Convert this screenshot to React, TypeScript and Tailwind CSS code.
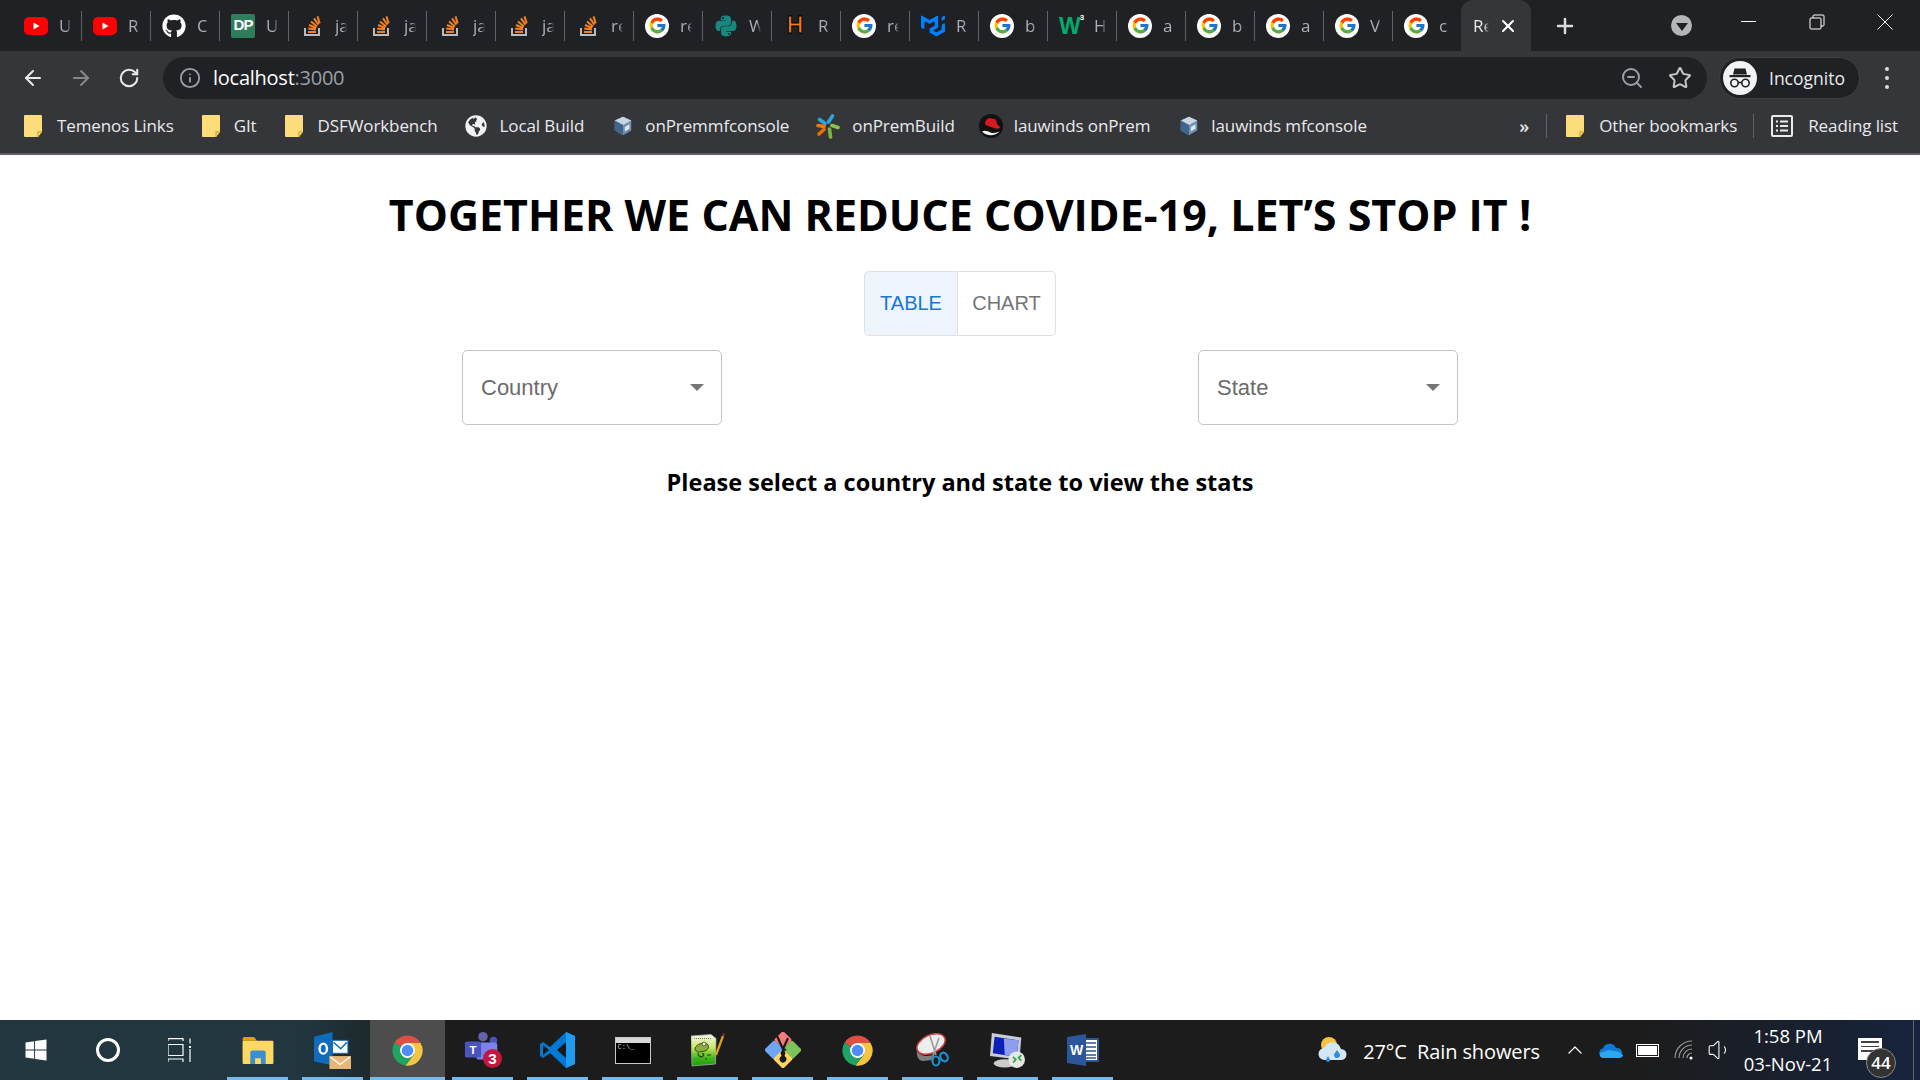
import React from 'react';
import { ArrowLeft, ArrowRight, RotateCw, Info, ZoomOut, Star, X, Plus, ChevronUp, Volume1 } from 'lucide-react';
import { FcGoogle } from 'react-icons/fc';
import { FaGithub, FaPython, FaWindows, FaGlobeAmericas } from 'react-icons/fa';
import { SiMui } from 'react-icons/si';

const ui = "font-['Open_Sans',sans-serif]";

function Youtube() {
  return (
    <svg viewBox="0 0 24 24" className="w-6 h-6">
      <rect x="0" y="3" width="24" height="18" rx="5" fill="#f00" />
      <path d="M9.5 8.5v7l6-3.5z" fill="#fff" />
    </svg>
  );
}

function GoogleIcon() {
  return (
    <div className="w-6 h-6 rounded-full bg-white flex items-center justify-center">
      <FcGoogle className="w-[19px] h-[19px]" />
    </div>
  );
}

function StackIcon() {
  return (
    <svg viewBox="0 0 24 24" className="w-6 h-6" fill="none">
      <path d="M5 14v7h14v-7" stroke="#bcbbbb" strokeWidth="2" />
      <path d="M8 18h8M8.2 14.6l7.7 1M9 11l7.2 3M11 7.4l6 5M14 4.4l4.4 6.2M17.5 2.4l2.2 7" stroke="#f48024" strokeWidth="2" />
    </svg>
  );
}

function TabIcon({ kind }: { kind: string }) {
  if (kind === 'yt') return <Youtube />;
  if (kind === 'g') return <GoogleIcon />;
  if (kind === 'gh') return <div className="w-6 h-6 rounded-full bg-[#202124] text-white"><FaGithub className="w-6 h-6" /></div>;
  if (kind === 'so') return <StackIcon />;
  if (kind === 'dp')
    return (
      <div className="w-6 h-6 bg-[#2e7d5b] rounded-[2px] flex items-center justify-center text-white text-[15px] font-bold font-['Liberation_Sans',sans-serif] tracking-[-1px]">
        DP
      </div>
    );
  if (kind === 'py') return <FaPython className="w-6 h-6 text-[#17877f]" />;
  if (kind === 'h')
    return (
      <div className="w-6 h-6 flex items-center justify-center text-[#e67e22] text-[23px] leading-none font-bold font-['Liberation_Sans',sans-serif] [-webkit-text-stroke:1px_#000]">
        H
      </div>
    );
  if (kind === 'mui') return <SiMui className="w-6 h-6 text-[#007fff]" />;
  return (
    <div className="w-6 h-6 flex items-start text-[#04aa6d] font-bold font-['Liberation_Sans',sans-serif] leading-none">
      <span className="text-[23px] mt-[1px] tracking-[-1px]">W</span>
      <span className="text-[8px] text-white">3</span>
    </div>
  );
}

const tabs = [
  ['yt', 'U'], ['yt', 'R'], ['gh', 'C'], ['dp', 'U'], ['so', 'ja'], ['so', 'ja'], ['so', 'ja'],
  ['so', 'ja'], ['so', 're'], ['g', 're'], ['py', 'W'], ['h', 'R'], ['g', 're'], ['mui', 'R'],
  ['g', 'b'], ['w3', 'H'], ['g', 'a'], ['g', 'b'], ['g', 'a'], ['g', 'V'], ['g', 'c'],
];

function TabStrip() {
  return (
    <div className="h-[51px] bg-[#202124] flex items-center pl-[13px] shrink-0">
      {tabs.map(([kind, label], i) => (
        <div key={i} className="w-[69px] h-[30px] flex items-center pl-[11px] border-r border-[#5f6368]">
          <TabIcon kind={kind} />
          <span className="ml-[11px] w-[12px] overflow-hidden text-[17px] text-[#a8b0b8] whitespace-nowrap [mask-image:linear-gradient(90deg,#000_65%,transparent)]">{label}</span>
        </div>
      ))}
      <div className="w-[70px] h-[51px] bg-[#35363a] rounded-t-xl -ml-[1px] flex items-center pl-3">
        <span className="w-[16px] overflow-hidden text-[17px] text-[#e8eaed] whitespace-nowrap [mask-image:linear-gradient(90deg,#000_70%,transparent)]">Re</span>
        <X className="w-5 h-5 ml-[9px] text-white" strokeWidth={2.5} />
      </div>
      <Plus className="w-6 h-6 ml-[22px] text-[#dadce0]" strokeWidth={2.5} />
      <div className="w-[21px] h-[21px] rounded-full bg-[#b4b6ba] ml-[94px] flex items-center justify-center">
        <div className="w-0 h-0 border-x-[6px] border-x-transparent border-t-[8px] border-t-[#202124] mt-[2px]" />
      </div>
      <div className="ml-[49px] w-[15px] h-[1px] bg-white -mt-[8px]" />
      <svg viewBox="0 0 16 16" className="ml-[53px] w-4 h-4 -mt-[7px]" fill="none" stroke="#fff" strokeWidth="1">
        <rect x="1" y="4" width="11" height="11" rx="1" />
        <path d="M4 4V2a1 1 0 0 1 1-1h9a1 1 0 0 1 1 1v9a1 1 0 0 1-1 1h-2" />
      </svg>
      <svg viewBox="0 0 16 16" className="ml-[52px] w-4 h-4 -mt-[7px]" fill="none" stroke="#fff" strokeWidth="1">
        <path d="M0.5 0.5l15 15M15.5 0.5l-15 15" />
      </svg>
    </div>
  );
}

function IncognitoAvatar() {
  return (
    <svg viewBox="0 0 34 34" className="w-[34px] h-[34px]">
      <circle cx="17" cy="17" r="17" fill="#f1f3f4" />
      <path d="M11.5 7.5h11l1.5 6h-14z" fill="#202124" />
      <rect x="6.5" y="14" width="21" height="2.2" fill="#202124" />
      <circle cx="11.5" cy="22" r="3.7" fill="none" stroke="#202124" strokeWidth="1.6" />
      <circle cx="22.5" cy="22" r="3.7" fill="none" stroke="#202124" strokeWidth="1.6" />
      <path d="M15 21.5h4" stroke="#202124" strokeWidth="1.6" />
    </svg>
  );
}

function Toolbar() {
  return (
    <div className="h-[48px] bg-[#35363a] flex items-end shrink-0">
      <div className="flex items-center h-[42px] pl-[21px]">
        <ArrowLeft className="w-6 h-6 text-[#e8eaed]" strokeWidth={2} />
        <ArrowRight className="w-6 h-6 ml-6 text-[#85878a]" strokeWidth={2} />
        <RotateCw className="w-[22px] h-[22px] ml-[25px] text-[#e8eaed]" strokeWidth={2.2} />
      </div>
      <div className="h-[42px] w-[1544px] ml-[23px] rounded-full bg-[#202124] flex items-center pl-[16px] pr-[15px]">
        <Info className="w-[22px] h-[22px] text-[#9aa0a6]" strokeWidth={2} />
        <span className="ml-[12px] text-[20px] tracking-[-0.25px] text-white">
          localhost<span className="text-[#9aa0a6]">:3000</span>
        </span>
        <ZoomOut className="w-6 h-6 ml-auto text-[#9aa0a6]" strokeWidth={2} />
        <Star className="w-6 h-6 ml-6 text-[#c4c7c5]" strokeWidth={2} />
      </div>
      <div className="h-[42px] w-[141px] ml-[12px] rounded-full bg-[#202124] border border-[#3c4043] flex items-center pl-[3px]">
        <IncognitoAvatar />
        <span className="ml-[12px] text-[17.5px] text-[#e8eaed]">Incognito</span>
      </div>
      <div className="h-[42px] flex flex-col items-center justify-center gap-[5px] ml-[25px]">
        <div className="w-1 h-1 rounded-full bg-[#dadce0]" />
        <div className="w-1 h-1 rounded-full bg-[#dadce0]" />
        <div className="w-1 h-1 rounded-full bg-[#dadce0]" />
      </div>
    </div>
  );
}

function Folder() {
  return (
    <svg viewBox="0 0 18 22" className="w-[18px] h-[22px] shrink-0">
      <path d="M0 1a1 1 0 0 1 1-1h16a1 1 0 0 1 1 1v16l-4 5H1a1 1 0 0 1-1-1z" fill="#fddc7a" />
      <path d="M14 22v-5h4" fill="none" stroke="#d9a92e" strokeWidth="1.4" />
    </svg>
  );
}

function Cube() {
  return (
    <svg viewBox="0 0 24 24" className="w-[22px] h-[22px] shrink-0">
      <path d="M12 2l9 4v11l-9 5-9-5V6z" fill="#6f8fb0" />
      <path d="M12 2l9 4-9 5-9-5z" fill="#c9d6e2" />
      <path d="M3 6l9 5v11l-9-5z" fill="#3f658d" />
      <path d="M14 13l5-3v5l-5 3z" fill="#dfe7ee" />
    </svg>
  );
}

function Pinwheel() {
  return (
    <svg viewBox="0 0 24 25" className="w-6 h-[25px] shrink-0" fill="none" strokeWidth="3.6" strokeLinecap="round">
      <path d="M3.5 5.5L9 9.5" stroke="#2ca6dd" />
      <path d="M16.5 2L12.5 8" stroke="#2ca6dd" />
      <path d="M22 13.5L16 11.5" stroke="#8bc34a" />
      <path d="M14.5 23L13.5 15" stroke="#7cb342" />
      <path d="M2 11.5L8 12.5" stroke="#f57c00" />
      <path d="M3 20L8 15.5" stroke="#ef6c00" />
    </svg>
  );
}

function RedHat() {
  return (
    <svg viewBox="0 0 24 24" className="w-6 h-6 shrink-0">
      <circle cx="12" cy="12" r="12" fill="#111" />
      <path d="M6 10c0-3 2-6 5-6l3 1c2-1 4 2 4 5l3 3c0 2-3 2-6 1l-7-2.5c-1 0-1.5-1-2-1.5z" fill="#d71920" />
      <path d="M3 17.5c3-1.500 6 0 8.500 1 3 1 6 .5 9-1A12 12 0 0 1 3 17.500z" fill="#f4f4f4" />
    </svg>
  );
}

function ReadingList() {
  return (
    <svg viewBox="0 0 22 22" className="w-[22px] h-[22px]" fill="none" stroke="#e8eaed" strokeWidth="2">
      <rect x="1" y="1" width="20" height="20" rx="1" />
      <path d="M5 6.5h2M9 6.5h8M5 11h2M9 11h8M5 15.5h2M9 15.5h8" />
    </svg>
  );
}

const bookmarks: [React.ReactNode, string, string, string][] = [
  [<Folder />, 'Temenos Links', 'ml-[24px]', 'gap-[15px]'],
  [<Folder />, 'GIt', 'ml-[28px]', 'gap-[14px]'],
  [<Folder />, 'DSFWorkbench', 'ml-[28px]', 'gap-[15px]'],
  [<FaGlobeAmericas className="w-[22px] h-[22px] text-[#f1f3f4] shrink-0" />, 'Local Build', 'ml-[27px]', 'gap-[13px]'],
  [<Cube />, 'onPremmfconsole', 'ml-[28px]', 'gap-[11px]'],
  [<Pinwheel />, 'onPremBuild', 'ml-[27px]', 'gap-[12px]'],
  [<RedHat />, 'lauwinds onPrem', 'ml-[24px]', 'gap-[11px]'],
  [<Cube />, 'lauwinds mfconsole', 'ml-[28px]', 'gap-[11px]'],
];

function BookmarksBar() {
  return (
    <div className="h-[54px] bg-[#35363a] flex items-center shrink-0 text-[17px] tracking-[-0.1px] text-[#e8eaed]">
      {bookmarks.map(([icon, label, cls, gap], i) => (
        <div key={i} className={`flex items-center ${gap} ${cls}`}>
          {icon}
          <span className="whitespace-nowrap">{label}</span>
        </div>
      ))}
      <span className="ml-auto text-[18px] font-semibold">»</span>
      <div className="w-[1px] h-[24px] bg-[#5f6368] ml-[17px]" />
      <div className="flex items-center gap-[15px] ml-[19px]">
        <Folder />
        <span className="whitespace-nowrap">Other bookmarks</span>
      </div>
      <div className="w-[1px] h-[24px] bg-[#5f6368] ml-[16px]" />
      <div className="flex items-center gap-[15px] ml-[17px] mr-[22px]">
        <ReadingList />
        <span className="whitespace-nowrap">Reading list</span>
      </div>
    </div>
  );
}

function Select({ label }: { label: string }) {
  return (
    <div className="w-[260px] h-[75px] border border-[#c4c4c4] rounded-[5px] flex items-center pl-[18px] pr-[17px] font-['Liberation_Sans',sans-serif] text-[22px] text-[#6b6b6b]">
      <span>{label}</span>
      <div className="ml-auto w-0 h-0 border-x-[7px] border-x-transparent border-t-[7px] border-t-[#757575]" />
    </div>
  );
}

function Page() {
  return (
    <main className="flex-1 bg-white flex flex-col items-center border-t-2 border-[#5f6063]">
      <h1 className="mt-[30px] text-[43px] leading-[60px] font-bold text-black">
        TOGETHER WE CAN REDUCE COVIDE-19, LET’S STOP IT !
      </h1>
      <div className="mt-[26px] flex h-[65px] font-['Liberation_Sans',sans-serif] text-[20px]">
        <button className="w-[94px] pb-[2px] bg-[#edf4fb] text-[#1976d2] border border-[#e0e0e0] rounded-l-[5px]">TABLE</button>
        <button className="w-[98px] pb-[2px] bg-white text-[#757575] border border-l-0 border-[#e0e0e0] rounded-r-[5px]">CHART</button>
      </div>
      <div className="mt-[14px] w-[996px] flex justify-between">
        <Select label="Country" />
        <Select label="State" />
      </div>
      <p className="mt-[39px] text-[23.5px] leading-[36px] font-bold text-black">
        Please select a country and state to view the stats
      </p>
    </main>
  );
}

function ChromeIcon() {
  return (
    <svg viewBox="0 0 24 24" className="w-[33px] h-[33px]">
      <path d="M2.6 6.3A11 11 0 0 1 21.5 6.5H12L7.2 9.2z" fill="#dd5144" />
      <path d="M21.5 6.5A11 11 0 0 1 10.5 22.9L16.8 14.7 12 6.5z" fill="#f4c542" />
      <path d="M10.5 22.9A11 11 0 0 1 2.6 6.3L7.2 9.2 12 17.5 16.8 14.7z" fill="#1fa463" />
      <circle cx="12" cy="12" r="5.4" fill="#fff" />
      <circle cx="12" cy="12" r="4.2" fill="#4f8ef7" />
    </svg>
  );
}

function ExplorerIcon() {
  return (
    <svg viewBox="0 0 32 28" className="w-8 h-[27px]">
      <path d="M0 2a2 2 0 0 1 2-2h10l3 4H0z" fill="#e0a100" />
      <rect x="0" y="4" width="32" height="24" rx="1" fill="#fdd862" />
      <path d="M8 28V16a2 2 0 0 1 2-2h12a2 2 0 0 1 2 2v12h-5v-6h-6v6z" fill="#3a8fd0" />
    </svg>
  );
}

function OutlookIcon() {
  return (
    <svg viewBox="0 0 36 40" preserveAspectRatio="none" className="w-[37px] h-[37px]">
      <path d="M0 5l18-5v36L0 32z" fill="#0f6cbd" />
      <rect x="18" y="9" width="15" height="14" fill="#fff" stroke="#0f6cbd" />
      <path d="M19 11l7 7 6-7" fill="none" stroke="#0f6cbd" strokeWidth="1.5" />
      <ellipse cx="9" cy="18" rx="3.6" ry="5.4" fill="none" stroke="#fff" strokeWidth="2.4" />
      <rect x="15" y="26" width="21" height="14" fill="#e8b676" />
      <path d="M16 27l9.5 8 9.5-8" fill="none" stroke="#fff" strokeWidth="1.3" />
    </svg>
  );
}

function TeamsIcon() {
  return (
    <svg viewBox="0 0 38 40" className="w-[38px] h-[38px]">
      <circle cx="19" cy="6" r="5" fill="#6264a7" />
      <circle cx="30" cy="10" r="4" fill="#4b53bc" />
      <rect x="12" y="12" width="22" height="18" rx="3" fill="#7b83eb" />
      <rect x="0" y="11" width="17" height="17" rx="2" fill="#4b53bc" />
      <text x="8.5" y="24" textAnchor="middle" fontSize="12" fontWeight="700" fill="#fff" fontFamily="Liberation Sans, sans-serif">T</text>
      <circle cx="29" cy="29" r="10" fill="#c4173f" />
      <text x="29" y="35" textAnchor="middle" fontSize="16" fontWeight="700" fill="#fff" fontFamily="Liberation Sans, sans-serif">3</text>
    </svg>
  );
}

function CodeIcon() {
  return (
    <svg viewBox="0 0 36 36" className="w-9 h-9">
      <path d="M26 0l9 4v28l-9 4-16-15-7 5-3-2v-12l3-2 7 5z" fill="#0078d4" />
      <path d="M26 0l9 4v28l-9 4z" fill="#1f9cf0" />
      <path d="M26 10l-9 8 9 8z" fill="#1a1a1a" />
      <path d="M3 13l6 5-6 5z" fill="#1a1a1a" />
    </svg>
  );
}

function TerminalIcon() {
  return (
    <div className="w-[36px] h-[27px] border border-[#c8c8c8] flex flex-col">
      <div className="h-[5px] bg-[#d9d9d9]" />
      <div className="flex-1 bg-black text-[7px] leading-[9px] text-[#ccc] font-['Liberation_Mono',monospace] pl-[2px]">C:\_</div>
    </div>
  );
}

function NotepadIcon() {
  return (
    <svg viewBox="0 0 34 34" className="w-[34px] h-[34px]">
      <defs>
        <linearGradient id="npgreen" x1="0" y1="0" x2="0" y2="1">
          <stop offset="0" stopColor="#f3f6ea" />
          <stop offset="0.4" stopColor="#cde86a" />
          <stop offset="0.75" stopColor="#3fb51c" />
          <stop offset="1" stopColor="#1f9b12" />
        </linearGradient>
      </defs>
      <path d="M0 3l20-1.5 5 4L24.5 31 1 33z" fill="url(#npgreen)" stroke="#b5b5b5" strokeWidth="0.7" />
      <path d="M3 5.5h17" stroke="#777" strokeWidth="1" strokeDasharray="1 1" />
      <path d="M4 15c2-4 8-6 12-4 3 2 1 6-2 7l-6 1c-2 0-4-1-4-4z" fill="#8bb23a" stroke="#2d3f12" strokeWidth="0.9" />
      <circle cx="13" cy="11" r="2" fill="#fff" stroke="#2d3f12" strokeWidth="0.8" />
      <path d="M7 20c0 3 3 5 5 3s0-3-1-2M16 22h4M14 26h2" fill="none" stroke="#2d3f12" strokeWidth="1.2" />
      <path d="M25 22L32 3" stroke="#e0a21f" strokeWidth="2.2" />
      <path d="M32 3l1-2.5" stroke="#7a2f2f" strokeWidth="2.2" />
    </svg>
  );
}

function SourcetreeIcon() {
  return (
    <svg viewBox="0 0 36 36" className="w-9 h-9">
      <rect x="11.5" y="1.5" width="13" height="13" rx="2" transform="rotate(45 18 8)" fill="#f27b7b" />
      <rect x="2" y="11" width="14" height="14" rx="2" transform="rotate(45 9 18)" fill="#6ea6f7" />
      <rect x="20" y="11" width="14" height="14" rx="2" transform="rotate(45 27 18)" fill="#7cc35c" />
      <rect x="11" y="20" width="14" height="14" rx="2" transform="rotate(45 18 27)" fill="#fdd663" />
      <path d="M12 4l6 13 3 1M23 6l-5 11" stroke="#1a1a1a" strokeWidth="2.2" fill="none" />
      <path d="M18 16l2.5 5-1 3a3.5 3.5 0 1 1-3 0l-1-3z" fill="#1a1a1a" />
    </svg>
  );
}

function SnipIcon() {
  return (
    <svg viewBox="0 0 34 34" className="w-[34px] h-[34px]">
      <path d="M1 18c3 6 13 6 18 3l-3 6-9 1c-4 0-7-5-6-10z" fill="#7d7d7d" />
      <ellipse cx="15" cy="11" rx="15" ry="9" transform="rotate(-25 15 11)" fill="#eeeeee" stroke="#cf3f3f" strokeWidth="1.5" />
      <path d="M14 3l6 19M23 5l-6 17" stroke="#9b9b9b" strokeWidth="1.6" />
      <ellipse cx="20" cy="28" rx="3.5" ry="4.5" fill="none" stroke="#1b8fd0" strokeWidth="2.2" />
      <ellipse cx="28" cy="24" rx="3.5" ry="4.5" transform="rotate(-30 28 24)" fill="none" stroke="#1b8fd0" strokeWidth="2.2" />
    </svg>
  );
}

function RemoteIcon() {
  return (
    <svg viewBox="0 0 38 38" className="w-[35px] h-[35px]">
      <path d="M2 0l32 5-2 24L0 25z" fill="#c9ccd2" />
      <path d="M5 4l26 4-2 18L3 22z" fill="#0a20b8" />
      <path d="M15 6l16 2-2 18-13-2z" fill="#8f9df0" />
      <ellipse cx="16" cy="33" rx="12" ry="4.5" fill="#ccc" />
      <circle cx="29" cy="29" r="9" fill="#e6e6e6" />
      <path d="M25 26l3 3-3 3M34 24l-3 3 3 3" fill="none" stroke="#2f9e44" strokeWidth="1.8" />
    </svg>
  );
}

function WordIcon() {
  return (
    <svg viewBox="0 0 32 32" className="w-8 h-8">
      <rect x="15" y="4" width="17" height="24" rx="1" fill="#2b579a" />
      <rect x="17" y="6" width="13" height="20" fill="#fff" />
      <path d="M19 9h10M19 13h10M19 17h10M19 21h10M19 24h10" stroke="#2b579a" strokeWidth="1.4" />
      <path d="M0 3l19-3v32L0 29z" fill="#2b579a" />
      <text x="9.5" y="21" textAnchor="middle" fontSize="14" fontWeight="700" fill="#fff" fontFamily="Liberation Sans, sans-serif">W</text>
    </svg>
  );
}

const slots: { icon: React.ReactNode; active?: boolean }[] = [
  { icon: <ExplorerIcon /> },
  { icon: <OutlookIcon /> },
  { icon: <ChromeIcon />, active: true },
  { icon: <TeamsIcon /> },
  { icon: <CodeIcon /> },
  { icon: <TerminalIcon /> },
  { icon: <NotepadIcon /> },
  { icon: <SourcetreeIcon /> },
  { icon: <ChromeIcon /> },
  { icon: <SnipIcon /> },
  { icon: <RemoteIcon /> },
  { icon: <WordIcon /> },
];

function Taskbar() {
  return (
    <div className="h-[60px] shrink-0 flex items-stretch bg-[linear-gradient(90deg,#21363f_0,#21363f_300px,#1c1c1c_440px,#1c1c1c_1640px,#17233a_1900px)] text-white">
      <div className="w-[72px] flex items-center justify-center"><FaWindows className="w-6 h-6" /></div>
      <div className="w-[72px] flex items-center justify-center">
        <div className="w-6 h-6 rounded-full border-[3px] border-white" />
      </div>
      <div className="w-[72px] flex items-center justify-center">
        <svg viewBox="0 0 24 24" className="w-6 h-6" fill="none" stroke="#fff" strokeWidth="1.2">
          <path d="M0 3V.6h15V3M0 6.5h15v11H0zM0 24v-3h15v3M22 .5v5M22 11v13" />
          <rect x="21" y="8" width="2" height="2" fill="#fff" stroke="none" />
        </svg>
      </div>
      <div className="flex ml-[4px]">
        {slots.map((s, i) => (
          <div key={i} className={`w-[75px] relative flex items-center justify-center ${s.active ? 'bg-[#4d4d4d]' : ''}`}>
            {s.icon}
            <div className={`absolute bottom-0 h-[3px] bg-[#76b9ed] ${s.active ? 'inset-x-0' : 'inset-x-[7px]'}`} />
          </div>
        ))}
      </div>
      <div className="ml-auto flex items-center">
        <svg viewBox="0 0 30 30" className="w-[30px] h-[30px]">
          <circle cx="11" cy="10" r="8" fill="#f5c242" />
          <path d="M7 25a6 6 0 0 1-1-12 9 9 0 0 1 17 1 5.5 5.5 0 0 1 0 11z" fill="#d5e6f5" />
          <path d="M19 15c2 3 3 4 3 5a3 3 0 0 1-6 0c0-1 1-2 3-5zM10 21c1 2 2 3 2 4a2 2 0 0 1-4 0c0-1 1-2 2-4z" fill="#2e8fdc" />
        </svg>
        <span className="ml-[15px] mt-[3px] text-[20px] tracking-[-0.1px] whitespace-nowrap">27°C&nbsp; Rain showers</span>
        <ChevronUp className="ml-[23px] w-[24px] h-[24px]" strokeWidth={1.2} />
        <svg viewBox="0 0 24 16" className="ml-[12px] w-6 h-4">
          <path d="M5 16a5 5 0 0 1-1-9.8A7 7 0 0 1 17 6a5 5 0 0 1 2 10z" fill="#0f78d4" />
          <path d="M5 16c-3 0-5-2-4-5l9-3 10 2 4 3c0 2-2 3-4 3z" fill="#2ba7ee" />
        </svg>
        <div className="ml-[13px] w-[23px] h-[13px] border-[1.5px] border-white flex items-stretch p-[1px] relative">
          <div className="bg-white w-full" />
        </div>
        <svg viewBox="0 0 20 20" className="ml-[15px] w-5 h-5" fill="none" stroke="#999" strokeWidth="1.2">
          <path d="M1 18A17 17 0 0 1 18 1M5 18A13 13 0 0 1 18 5M9 18a9 9 0 0 1 9-9M13 18a5 5 0 0 1 5-5" />
          <circle cx="17" cy="18" r="1.5" fill="#fff" stroke="none" />
        </svg>
        <Volume1 className="ml-[13px] w-[26px] h-[26px]" strokeWidth={1} />
        <div className="ml-[5px] w-[100px] flex flex-col items-center text-[18.5px] leading-[28px]">
          <span>1:58 PM</span>
          <span>03-Nov-21</span>
        </div>
        <div className="relative ml-[20px] mr-[31px] w-6 h-6">
          <div className="w-[24px] h-[22px] bg-white flex flex-col gap-[3px] p-[3px]">
            <div className="h-[1.5px] bg-[#444]" />
            <div className="h-[1.5px] bg-[#444]" />
            <div className="h-[1.5px] bg-[#444]" />
          </div>
          <div className="absolute -right-[14px] top-[10px] w-[30px] h-[30px] rounded-full bg-[#333] border border-[#888] flex items-center justify-center text-[17px] font-semibold">44</div>
        </div>
        <div className="w-[1px] h-full bg-[#666] mr-[6px]" />
      </div>
    </div>
  );
}

export default function App() {
  return (
    <div className={`h-screen w-[1920px] overflow-hidden flex flex-col ${ui}`}>
      <TabStrip />
      <Toolbar />
      <BookmarksBar />
      <Page />
      <Taskbar />
    </div>
  );
}
